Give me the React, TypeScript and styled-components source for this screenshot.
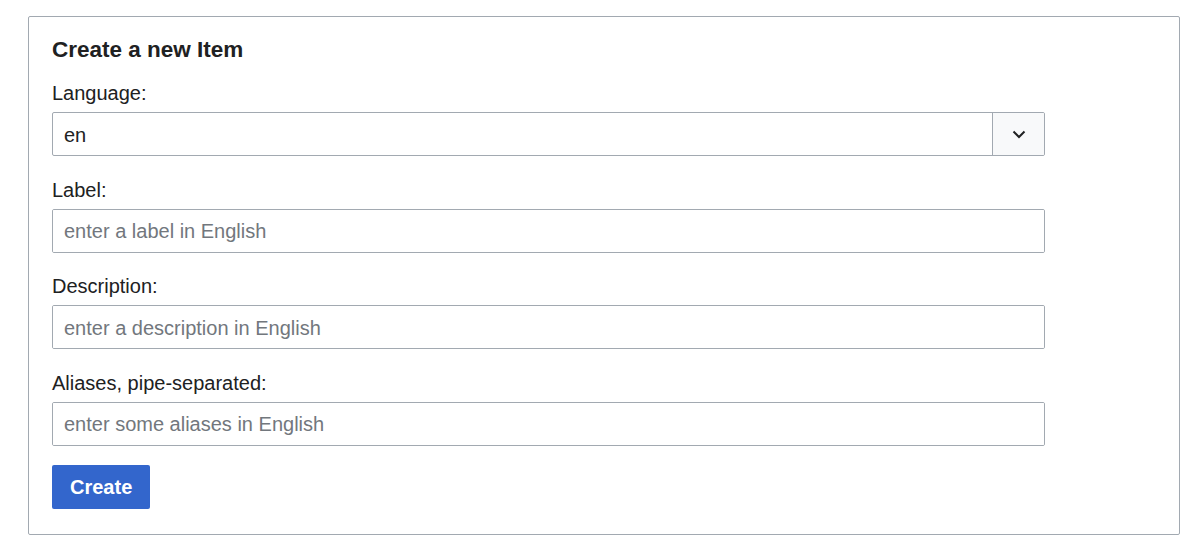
import * as React from "react";
import styled, { createGlobalStyle } from "styled-components";

const GlobalStyle = createGlobalStyle`
  body {
    margin: 0;
    background: #ffffff;
    font-family: "Liberation Sans", Arial, sans-serif;
    color: #202122;
  }
`;

const Page = styled.div`
  padding: 16px 20px 0 28px;
`;

const Panel = styled.form`
  border: 1px solid #a2a9b1;
  border-radius: 2px;
  padding: 22px 23px 25px 23px;
  display: flex;
  flex-direction: column;
`;

const Title = styled.h2`
  margin: 0 0 20px;
  font-size: 22.5px;
  line-height: 22px;
  font-weight: bold;
`;

const Field = styled.div`
  display: flex;
  flex-direction: column;
  gap: 7px;
  margin-bottom: 21.5px;
`;

const Label = styled.label`
  font-size: 20px;
  line-height: 24px;
`;

const Control = styled.div`
  max-width: 993px;
  height: 44px;
  box-sizing: border-box;
  border: 1px solid #a2a9b1;
  border-radius: 2px;
  display: flex;
  align-items: stretch;
  overflow: hidden;
`;

const Input = styled.input`
  flex: 1;
  border: none;
  outline: none;
  padding: 2px 11px 0;
  font-family: inherit;
  font-size: 20px;
  color: #202122;
  background: #fff;

  &::placeholder {
    color: #72777d;
    opacity: 1;
  }
`;

const SelectValue = styled.div`
  flex: 1;
  display: flex;
  align-items: center;
  padding: 2px 11px 0;
  font-size: 20px;
`;

const Handle = styled.div`
  width: 51px;
  border-left: 1px solid #a2a9b1;
  background: #f8f9fa;
  display: flex;
  align-items: center;
  justify-content: center;
`;

const Button = styled.button`
  align-self: flex-start;
  height: 44px;
  padding: 0 18px;
  border: none;
  border-radius: 2px;
  background: #3366cc;
  color: #fff;
  font-family: inherit;
  font-size: 20px;
  font-weight: bold;
  margin-top: -2px;
`;

const fields = [
  { label: "Label:", placeholder: "enter a label in English" },
  { label: "Description:", placeholder: "enter a description in English" },
  { label: "Aliases, pipe-separated:", placeholder: "enter some aliases in English" },
];

export default function App() {
  return (
    <>
      <GlobalStyle />
      <Page>
        <Panel onSubmit={(e) => e.preventDefault()}>
          <Title>Create a new Item</Title>
          <Field>
            <Label>Language:</Label>
            <Control>
              <SelectValue>en</SelectValue>
              <Handle>
                <svg width="14" height="9" viewBox="0 0 14 9">
                  <path d="M1.5 1.5 L7 7 L12.5 1.5" fill="none" stroke="#202122" strokeWidth="2" />
                </svg>
              </Handle>
            </Control>
          </Field>
          {fields.map((f) => (
            <Field key={f.label}>
              <Label>{f.label}</Label>
              <Control>
                <Input placeholder={f.placeholder} />
              </Control>
            </Field>
          ))}
          <Button type="submit">Create</Button>
        </Panel>
      </Page>
    </>
  );
}
